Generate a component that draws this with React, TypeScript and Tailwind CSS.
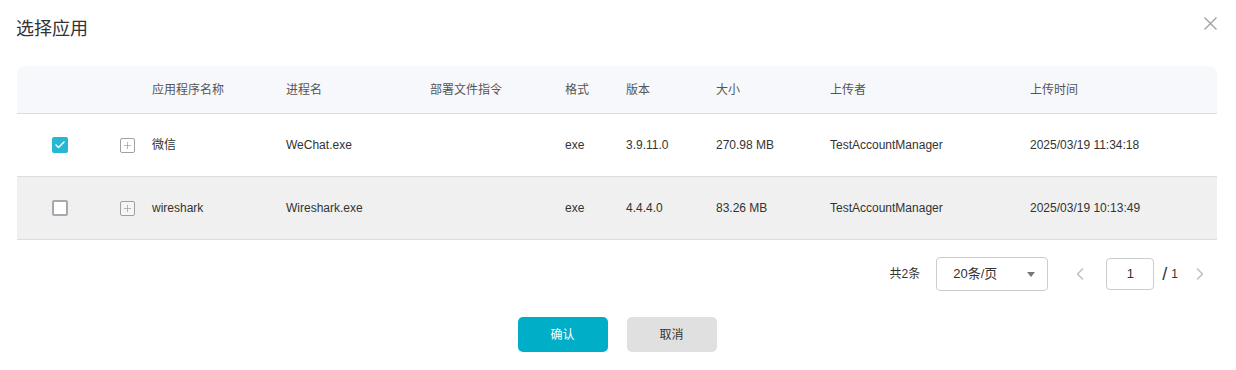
import { Plus, Check, ChevronLeft, ChevronRight } from "lucide-react";

interface AppRow {
  name: string;
  process: string;
  format: string;
  version: string;
  size: string;
  uploader: string;
  time: string;
  checked: boolean;
}

const rows: AppRow[] = [
  {
    name: "微信",
    process: "WeChat.exe",
    format: "exe",
    version: "3.9.11.0",
    size: "270.98 MB",
    uploader: "TestAccountManager",
    time: "2025/03/19 11:34:18",
    checked: true,
  },
  {
    name: "wireshark",
    process: "Wireshark.exe",
    format: "exe",
    version: "4.4.4.0",
    size: "83.26 MB",
    uploader: "TestAccountManager",
    time: "2025/03/19 10:13:49",
    checked: false,
  },
];

const cols = "grid grid-cols-[86px_49px_134px_144px_135px_61px_90px_114px_200px_1fr] items-center";

const Checkbox = ({ checked }: { checked: boolean }) =>
  checked ? (
    <div className="w-4 h-4 rounded-[2px] bg-[#26b7d3] flex items-center justify-center">
      <Check className="w-3 h-3 text-white" strokeWidth={3} />
    </div>
  ) : (
    <div className="w-4 h-4 rounded-[2px] border-2 border-[#a7a7b0] bg-white" />
  );

export default function App() {
  return (
    <div
      className="w-[1236px] h-[370px] bg-white relative text-[#333]"
      style={{ fontFamily: '"Liberation Sans", "Noto Sans CJK SC", sans-serif' }}
    >
      <div className="flex items-center justify-between pl-4 pr-[19px] pt-[17px] h-[40px]">
        <h2 className="text-[18px] leading-[22px] text-[#333]">选择应用</h2>
        <svg width="13" height="13" viewBox="0 0 13 13" className="-mt-[10px]">
          <path d="M0.5 0.5 L12.5 12.5 M12.5 0.5 L0.5 12.5" stroke="#a0a0a0" strokeWidth="1.4" fill="none" />
        </svg>
      </div>

      <div className="ml-[17px] w-[1200px] mt-[26px]">
        <div className={`${cols} h-[48px] bg-[#f7f8fb] rounded-t-lg border-b border-[#dcdcdc] text-[12px] text-[#555]`}>
          <div />
          <div />
          <div>应用程序名称</div>
          <div>进程名</div>
          <div>部署文件指令</div>
          <div>格式</div>
          <div>版本</div>
          <div>大小</div>
          <div>上传者</div>
          <div>上传时间</div>
        </div>
        {rows.map((r, i) => (
          <div
            key={r.process}
            className={`${cols} h-[63px] border-b border-[#dcdcdc] text-[12px] ${i === 1 ? "bg-[#f0f0f0]" : "bg-white"}`}
          >
            <div className="flex justify-center">
              <Checkbox checked={r.checked} />
            </div>
            <div className="pl-[17px]">
              <div className="w-[15px] h-[15px] border border-[#a0a0a0] rounded-[2px] flex items-center justify-center bg-white/40">
                <Plus className="w-[11px] h-[11px] text-[#999]" strokeWidth={1.5} />
              </div>
            </div>
            <div>{r.name}</div>
            <div>{r.process}</div>
            <div />
            <div>{r.format}</div>
            <div>{r.version}</div>
            <div>{r.size}</div>
            <div>{r.uploader}</div>
            <div>{r.time}</div>
          </div>
        ))}
      </div>

      <div className="flex items-center justify-end mt-[17px] pr-[26px] text-[12px]">
        <span className="mr-4">共2条</span>
        <div className="w-[112px] h-[34px] border border-[#ccc] rounded flex items-center justify-between pl-4 pr-3 text-[13px]">
          <span>20条/页</span>
          <span className="w-0 h-0 border-l-[4px] border-r-[4px] border-t-[5px] border-l-transparent border-r-transparent border-t-[#777]" />
        </div>
        <ChevronLeft className="w-5 h-5 text-[#bbb] ml-[22px]" strokeWidth={1.5} />
        <div className="w-[48px] h-[32px] border border-[#ccc] rounded ml-[16px] flex items-center justify-center text-[13px]">
          1
        </div>
        <span className="ml-[8px] text-[18px] leading-none">/</span>
        <span className="ml-[4px] text-[12px]">1</span>
        <ChevronRight className="w-5 h-5 text-[#bbb] ml-[12px]" strokeWidth={1.5} />
      </div>

      <div className="flex justify-center gap-[19px] mt-[26px] pr-[2px] text-[12px]">
        <button className="w-[90px] h-[35px] rounded-[5px] bg-[#00aec7] text-white">确认</button>
        <button className="w-[90px] h-[35px] rounded-[5px] bg-[#e0e0e0] text-[#333]">取消</button>
      </div>
    </div>
  );
}
